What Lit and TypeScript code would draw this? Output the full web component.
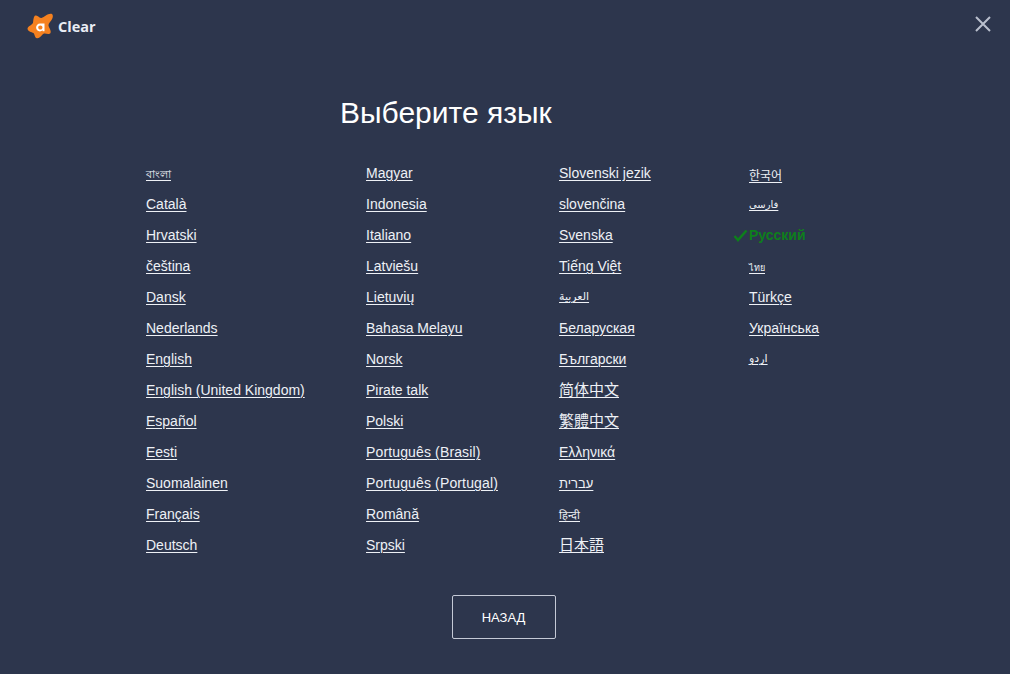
import { LitElement, html, css } from "lit";
import { customElement } from "lit/decorators.js";

type Lang = { t: string; c?: string; r?: string };
const cols: Lang[][] = [
  [{ t: "বাংলা", c: "sm" }, { t: "Català" }, { t: "Hrvatski" }, { t: "čeština" }, { t: "Dansk" }, { t: "Nederlands" }, { t: "English" }, { t: "English (United Kingdom)" }, { t: "Español" }, { t: "Eesti" }, { t: "Suomalainen" }, { t: "Français" }, { t: "Deutsch" }],
  [{ t: "Magyar" }, { t: "Indonesia" }, { t: "Italiano" }, { t: "Latviešu" }, { t: "Lietuvių" }, { t: "Bahasa Melayu" }, { t: "Norsk" }, { t: "Pirate talk" }, { t: "Polski" }, { t: "Português (Brasil)", c: "wd" }, { t: "Português (Portugal)", c: "wd" }, { t: "Română" }, { t: "Srpski" }],
  [{ t: "Slovenski jezik" }, { t: "slovenčina" }, { t: "Svenska" }, { t: "Tiếng Việt" }, { t: "العربية", c: "sm", r: "up2" }, { t: "Беларуская" }, { t: "Български" }, { t: "简体中文", c: "cjk", r: "up2" }, { t: "繁體中文", c: "cjk tc", r: "up2" }, { t: "Ελληνικά" }, { t: "עברית", c: "he" }, { t: "हिन्दी", c: "sm" }, { t: "日本語", c: "cjk jp", r: "up2" }],
  [{ t: "한국어", c: "ko", r: "down1" }, { t: "فارسی", c: "sm fa", r: "up1" }, { t: "Русский", c: "active" }, { t: "ไทย", c: "sm th" }, { t: "Türkçe" }, { t: "Українська" }, { t: "اردو", c: "sm", r: "up2" }],
];

@customElement("app-root")
export class AppRoot extends LitElement {
  static styles = css`
    :host { display: block; width: 1010px; height: 674px; background: #2d364d; color: #fff; font-family: "Liberation Sans", Arial, sans-serif; overflow: hidden; }
    .top { display: flex; align-items: center; justify-content: space-between; padding: 12px 19px 0 27px; height: 28px; }
    .brand { display: flex; align-items: center; gap: 4px; font: bold 14.5px "Open Sans", "Liberation Sans", sans-serif; color: #e9edf4; }
    .close { display: block; align-self: flex-start; margin-top: 4px; }
    h1 { margin: 0; padding: 55px 0 0 340px; font-weight: 400; font-size: 30px; line-height: 36px; color: #fff; height: 63px; }
    .grid { display: grid; grid-template-columns: 220px 193px 190px auto; padding-left: 146px; }
    .col { display: flex; flex-direction: column; }
    .row { position: relative; height: 31px; line-height: 31px; font-size: 14px; white-space: nowrap; }
    .row.up2 { line-height: 27px; }
    .row.up1 { line-height: 29px; }
    .row.down1 { line-height: 33px; }
    a { color: #eef1f6; text-decoration: underline; text-underline-offset: 2px; text-decoration-thickness: 1px; }
    .wd { letter-spacing: 0.14px; }
    .sm { font-size: 11px; font-family: "DejaVu Sans", "Liberation Sans", sans-serif; }
    .fa { font-size: 10px; }
    .th { font-size: 9px; }
    .he { font-size: 13px; font-family: "Liberation Sans", "DejaVu Sans", sans-serif; }
    .ko { font-size: 12px; font-family: "Noto Sans CJK KR", sans-serif; }
    .cjk { font-size: 15px; font-family: "Noto Sans CJK SC", sans-serif; }
    .cjk.tc { font-family: "Noto Sans CJK TC", sans-serif; }
    .cjk.jp { font-family: "Noto Sans CJK JP", sans-serif; }
    .active { color: #0e7f1c; font-weight: 700; text-decoration: none; }
    .check { position: absolute; left: -16px; top: 9px; }
    .foot { display: flex; justify-content: center; padding-top: 34px; }
    button { width: 104px; height: 44px; box-sizing: border-box; background: none; border: 1px solid #c4c9d6; border-radius: 2px; color: #fff; font: 13px "Liberation Sans", Arial, sans-serif; margin-right: 3px; }
  `;

  private row(l: Lang) {
    const active = l.c === "active";
    return html`<div class="row ${l.r ?? ""}">
      ${active
        ? html`<svg class="check" width="15" height="13" viewBox="0 0 15 13"><path d="M1.5 7 L5 11 L13.5 1.5" fill="none" stroke="#0e7f1c" stroke-width="2.5"/></svg>`
        : ""}
      <a class=${l.c ?? ""}>${l.t}</a>
    </div>`;
  }

  render() {
    return html`
      <div class="top">
        <div class="brand">
          <svg width="27" height="26" viewBox="0 0 27 26">
            <path d="M0.5 15.5 C1 13 4.5 12.5 6 10 C6.5 6.5 6.5 3 8.5 2.5 C11 2 12 5 14.5 5 C17.5 4 21 0 24.5 0.8 C26.5 1.8 26.2 5 24.2 7.5 C22.8 9.2 21.5 10.5 21.5 12.5 C22 15 24.5 17.5 23.5 20 C22 22 18.5 20 16.5 20.8 C14.5 22 13 25.5 10 25.2 C7.5 24.8 8 21.5 6.5 20 C4.5 19 0.5 18.5 0.5 15.5 Z" fill="#f5811f"/>
            <path d="M17.5 10.5 V18.2 H15.6 V17.3 C14.9 18 13.9 18.4 12.9 18.4 C10.7 18.4 9.1 16.8 9.1 14.6 C9.1 12.3 10.8 10.6 13.1 10.6 C14.9 10.6 16.4 10.5 17.5 10.5 Z M13.3 12.4 C12.1 12.4 11.2 13.3 11.2 14.5 C11.2 15.7 12.1 16.6 13.3 16.6 C14.6 16.6 15.5 15.7 15.5 14.5 C15.5 13.3 14.6 12.4 13.3 12.4 Z" fill="#fff"/>
          </svg>
          <span>Clear</span>
        </div>
        <svg class="close" width="16" height="16" viewBox="0 0 16 16"><path d="M1 1 L15 15 M15 1 L1 15" stroke="#b9bfcd" stroke-width="2"/></svg>
      </div>
      <h1>Выберите язык</h1>
      <div class="grid">
        ${cols.map((c) => html`<div class="col">${c.map((l) => this.row(l))}</div>`)}
      </div>
      <div class="foot"><button>НАЗАД</button></div>
    `;
  }
}
